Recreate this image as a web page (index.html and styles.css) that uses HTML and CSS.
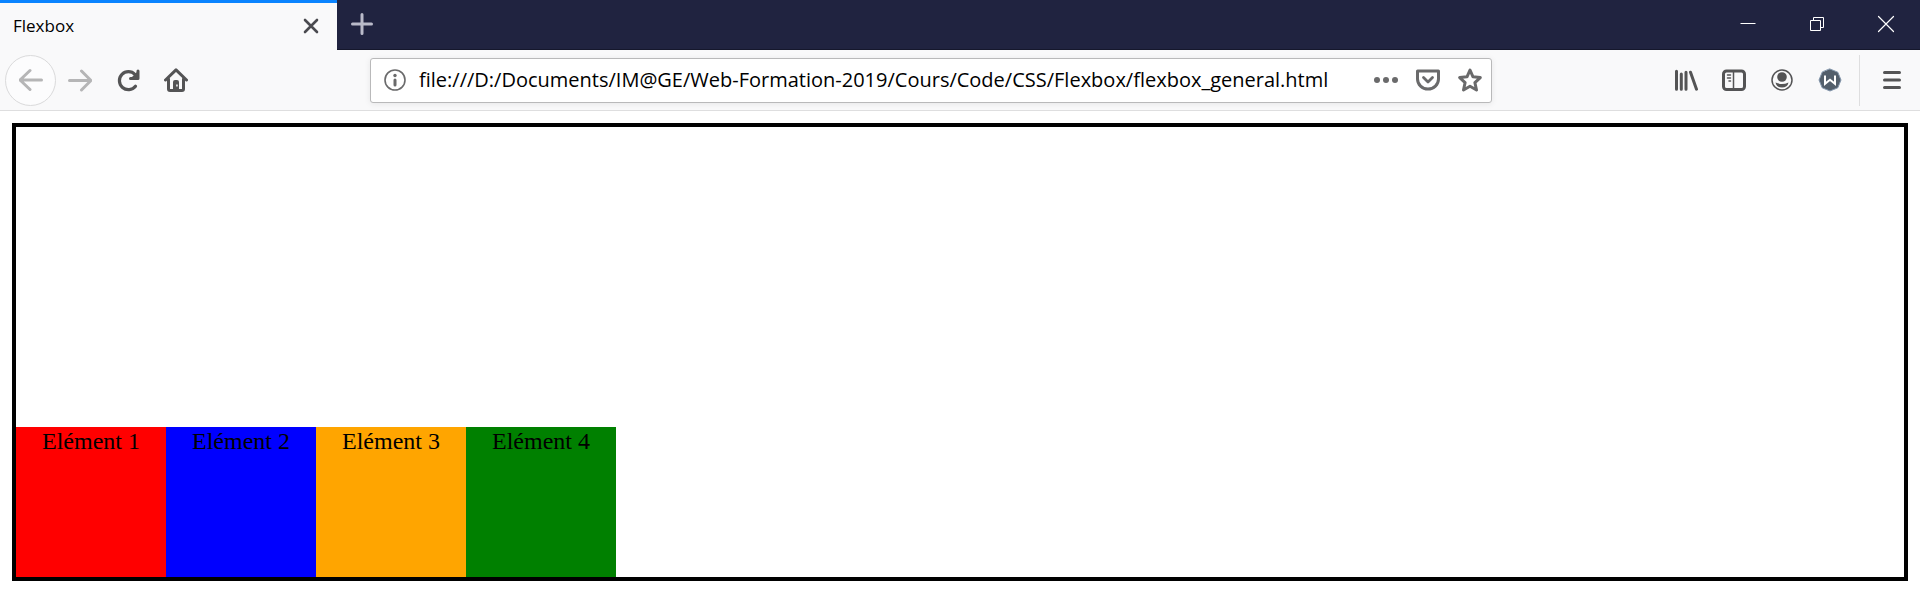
FILE: index.html
```html
<!DOCTYPE html>
<html lang="fr">
<head>
<meta charset="utf-8">
<title>Flexbox</title>
<link rel="stylesheet" href="styles.css">
</head>
<body>
<header class="browser">
  <div class="tab-strip">
    <div class="tab">
      <span class="tab-title">Flexbox</span>
      <button class="tab-close" aria-label="Fermer l'onglet"><svg class="icon" viewBox="0 0 24 24"><path d="M6 6l12 12M18 6L6 18" stroke-width="2.6"/></svg></button>
    </div>
    <button class="new-tab" aria-label="Nouvel onglet"><svg class="icon" viewBox="0 0 24 24"><path d="M12 2.500v19M2.500 12h19" stroke-width="3"/></svg></button>
    <div class="window-controls">
      <button class="window-button" aria-label="Réduire"><svg class="icon" viewBox="0 0 24 24"><path d="M4.500 11.500h15" stroke-width="1" stroke-linecap="butt"/></svg></button>
      <button class="window-button" aria-label="Restaurer"><svg class="icon" viewBox="0 0 24 24"><path d="M5.500 8.500h10v10h-10zM8.500 8.500v-3h10v10h-3" stroke-width="1" stroke-linejoin="miter" stroke-linecap="butt"/></svg></button>
      <button class="window-button" aria-label="Fermer"><svg class="icon" viewBox="0 0 24 24"><path d="M4.500 4.500l15 15M19.500 4.500l-15 15" stroke-width="1.200"/></svg></button>
    </div>
  </div>
  <nav class="toolbar">
    <div class="nav-buttons">
      <button class="back-button" aria-label="Précédent"><svg class="icon" viewBox="0 0 24 24"><path d="M22.500 12H1M11 2.500L1 12l10 9.500" stroke-width="3"/></svg></button>
      <button class="tool-button faded" aria-label="Suivant"><svg class="icon" viewBox="0 0 24 24"><path d="M1.500 12.500h21M13.500 3l9.500 9.500-9.500 9.500" stroke-width="3"/></svg></button>
      <button class="tool-button" aria-label="Actualiser"><svg class="icon" viewBox="0 0 24 24"><path d="M19.500 18.200A9 9 0 1 1 19 6.500" stroke-width="3.200"/><path d="M14.500 10.500H22V3" stroke-width="3"/><path class="solid" d="M22 3v8h-8z"/></svg></button>
      <button class="tool-button" aria-label="Accueil"><svg class="icon" viewBox="0 0 24 24"><path d="M1.500 12L12 1.800 22.500 12" stroke-width="3"/><path d="M4.500 11v10q0 1.500 1.500 1.500h12q1.500 0 1.500-1.500V11" stroke-width="3"/><path class="solid" fill-rule="evenodd" d="M9 22v-8q0-2 2-2h2q2 0 2 2v8zM12.200 16.500h1.500v2h-1.500z"/></svg></button>
    </div>
    <div class="address-bar">
      <button class="info-button" aria-label="Informations sur le site"><svg class="icon" viewBox="0 0 24 24"><circle cx="12" cy="12" r="10" stroke-width="1.600"/><circle class="solid" cx="12" cy="7.500" r="1.700"/><path d="M12 12v5" stroke-width="3"/></svg></button>
      <input class="address" type="text" aria-label="Adresse" value="file:///D:/Documents/IM@GE/Web-Formation-2019/Cours/Code/CSS/Flexbox/flexbox_general.html">
      <button class="address-button" aria-label="Actions de la page"><svg class="icon" viewBox="0 0 24 24"><g class="solid"><circle cx="3" cy="12" r="3"/><circle cx="12" cy="12" r="3"/><circle cx="21" cy="12" r="3"/></g></svg></button>
      <button class="address-button" aria-label="Pocket"><svg class="icon" viewBox="0 0 24 24"><path d="M1.500 3h21V11A10.500 10 0 0 1 1.500 11z" stroke-width="3"/><path d="M7.500 9.500l4.500 4.500 4.500-4.500" stroke-width="2.800"/></svg></button>
      <button class="address-button" aria-label="Marque-page"><svg class="icon" viewBox="0 0 24 24"><path d="M12 2L15 8.800 22.300 9.600 16.900 14.600 18.500 22 12 18.300 5.500 22 7.100 14.600 1.700 9.600 9 8.800z" stroke-width="3"/></svg></button>
    </div>
    <div class="extras">
      <button class="tool-button" aria-label="Bibliothèque"><svg class="icon" viewBox="0 0 24 24"><path d="M2.500 3.200v18M7.300 6v15.200M12 4.200v17M16.500 4.200l6 17" stroke-width="3"/></svg></button>
      <button class="tool-button" aria-label="Panneaux latéraux"><svg class="icon" viewBox="0 0 24 24"><rect x="1.500" y="3" width="21" height="18.500" rx="3" stroke-width="3"/><path d="M11.500 3v18.500" stroke-width="1.500"/><path d="M5.500 7h3M5.500 10h3M7 13h1.500" stroke-width="1.500"/></svg></button>
      <button class="tool-button" aria-label="Compte"><svg class="icon" viewBox="0 0 24 24"><circle cx="12" cy="12" r="10" stroke-width="1.500"/><circle class="solid" cx="12" cy="9" r="4.800"/><path class="solid" d="M5.500 14.500Q12 17.500 18.500 14.500Q17.500 19.500 12 19.500T5.500 14.500z"/></svg></button>
      <button class="tool-button" aria-label="Extension W"><svg class="icon" viewBox="0 0 24 24"><path class="badge-shape" d="M12 1l7.800 3.200L23 12l-3.200 7.800L12 23l-7.800-3.200L1 12l3.200-7.800z"/><path class="badge-mark" d="M7 7.500v8.300l5-4 5 4V7.500" stroke-width="2"/></svg></button>
    </div>
    <button class="menu-button" aria-label="Menu"><svg class="icon" viewBox="0 0 24 24"><path d="M4.500 4.500h15M4.500 12h15M4.500 19.500h15" stroke-width="3"/></svg></button>
  </nav>
</header>
<main class="container">
  <div class="item red">Elément 1</div>
  <div class="item blue">Elément 2</div>
  <div class="item orange">Elément 3</div>
  <div class="item green">Elément 4</div>
</main>
</body>
</html>
```
FILE: styles.css
```css
* { box-sizing: border-box; }

body {
  margin: 0;
  background: #fff;
  color: #000;
  font-family: "Liberation Serif", "Times New Roman", serif;
  font-size: 24px;
}

.browser { font-family: "Segoe UI", "Open Sans", sans-serif; }

button {
  display: flex;
  flex: none;
  align-items: center;
  justify-content: center;
  margin: 0;
  padding: 0;
  border: 0;
  background: none;
  color: inherit;
}

.icon {
  flex: none;
  width: 24px;
  height: 24px;
  fill: none;
  stroke: currentColor;
  stroke-linecap: round;
  stroke-linejoin: round;
}

.solid { fill: currentColor; stroke: none; }

/* Tabs and window controls */
.tab-strip {
  display: flex;
  height: 50px;
  background: #202340;
  box-shadow: inset 0 -1px #15172c;
}

.tab {
  display: flex;
  align-items: center;
  justify-content: space-between;
  width: 337px;
  padding: 0 14px 1px 13px;
  border-top: 3px solid #0a84ff;
  background: #f9f9fa;
}

.tab-title { font-size: 17px; line-height: 24px; }

.tab-close { color: #4a4a4f; }

.new-tab { width: 50px; height: 48px; color: #b9bac9; }

.window-controls { display: flex; margin-left: auto; }

.window-button { width: 69px; height: 48px; color: #fff; }

/* Navigation toolbar */
.toolbar {
  display: flex;
  align-items: center;
  height: 61px;
  padding-left: 5px;
  border-bottom: 1px solid #dededf;
  background: #f9f9fa;
  color: #545455;
}

.nav-buttons, .extras { display: flex; align-items: center; }

.back-button {
  width: 51px;
  height: 51px;
  border: 1px solid #dadadb;
  border-radius: 50%;
  background: #fcfcfd;
  color: #b5b5b6;
}

.tool-button { width: 48px; height: 48px; }

.faded { color: #b5b5b6; }

.address-bar {
  display: flex;
  flex: 1;
  align-items: center;
  height: 45px;
  margin: 0 170px;
  padding: 0 0 0 12px;
  border: 1px solid #b9b9ba;
  border-radius: 3px;
  background: #fff;
  box-shadow: 0 1px 6px rgba(0, 0, 0, 0.08);
  color: #6a6a6b;
}

.address {
  flex: 1;
  min-width: 0;
  margin: 0;
  padding: 0 0 0 12px;
  border: 0;
  outline: 0;
  background: none;
  color: #000;
  font: 20px/28px "Segoe UI", "Open Sans", sans-serif;
}

.address-button { width: 42px; height: 42px; }

.menu-button {
  width: 61px;
  height: 51px;
  margin-left: 5px;
  padding-left: 4px;
  border-left: 1px solid #dededf;
}

/* Demo content */
.container {
  display: flex;
  align-items: flex-end;
  height: 458px;
  margin: 12px;
  border: 4px solid #000;
}

.item {
  width: 150px;
  height: 150px;
  line-height: 28px;
  text-align: center;
}

.red { background: red; }
.blue { background: blue; }
.orange { background: orange; }
.green { background: green; }

.badge-shape { fill: #535f6c; stroke: #8497ad; }
.badge-mark { stroke: #fff; stroke-linecap: butt; stroke-linejoin: miter; }
```
